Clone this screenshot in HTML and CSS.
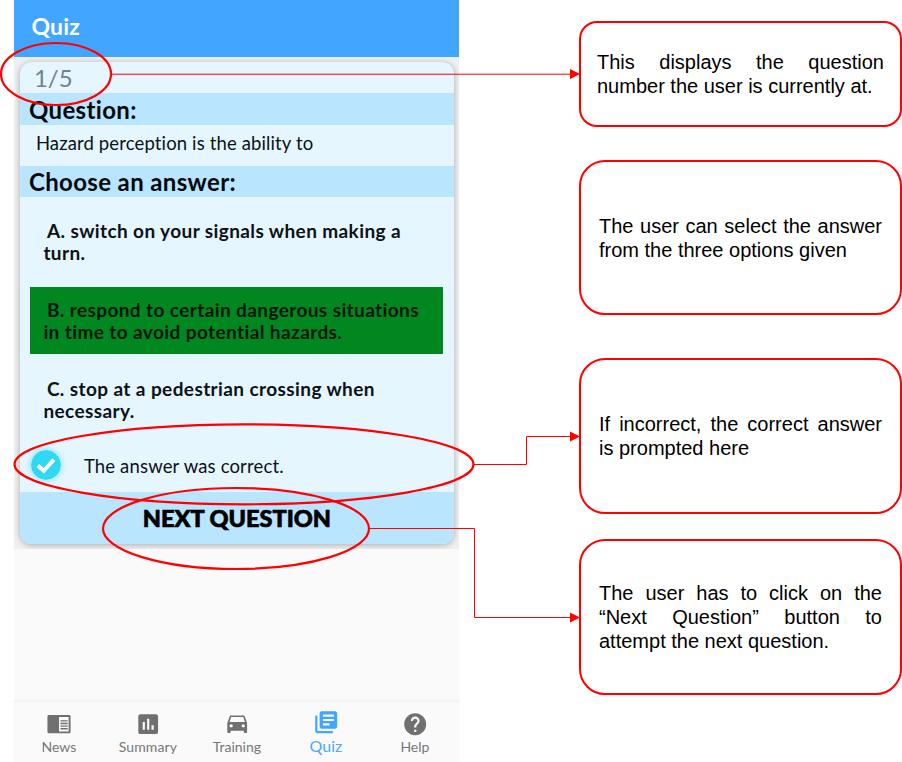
FILE: index.html
```html
<!DOCTYPE html>
<html lang="en">
<head>
<meta charset="utf-8">
<title>Quiz</title>
<link rel="stylesheet" href="styles.css">
</head>
<body>
<div class="board">
  <div class="phone">
    <header class="topbar"><span>Quiz</span></header>
    <main class="screen">
      <section class="card">
        <div class="counter"><span>1/5</span></div>
        <h2 class="band"><span>Question:</span></h2>
        <div class="prompt"><span>Hazard perception is the ability to</span></div>
        <h2 class="band band-choose"><span>Choose an answer:</span></h2>
        <div class="answers">
          <div class="option"><span class="lead">A. switch on your signals when making a</span><br><span>turn.</span></div>
          <div class="option correct"><span class="lead">B. respond to certain dangerous situations</span><br><span>in time to avoid potential hazards.</span></div>
          <div class="option last"><span class="lead">C. stop at a pedestrian crossing when</span><br><span>necessary.</span></div>
          <div class="result">
            <svg class="tick" width="30" height="30" viewBox="0 0 30 30"><circle cx="15" cy="15" r="15" fill="#2fd9f4"/><path d="M6.800 15.600l6 5.200L22.800 9.600" fill="none" stroke="#fff" stroke-width="4"/></svg>
            <span>The answer was correct.</span>
          </div>
        </div>
        <div class="next"><span>NEXT QUESTION</span></div>
      </section>
    </main>
    <nav class="tabs">
      <div class="tab"><svg width="26" height="24" viewBox="0 0 27 24"><path fill="#707070" fill-rule="evenodd" d="M3 2.500h21a1.500 1.500 0 0 1 1.500 1.500v16a1.500 1.500 0 0 1-1.500 1.500H3A1.500 1.500 0 0 1 1.500 20V4A1.500 1.500 0 0 1 3 2.500zM13.500 4.500v15h10v-15z"/><path d="M15 8.500h7.500M15 11.300h7.500M15 14h7.500M15 16.700h7.500" stroke="#707070" stroke-width="1.400"/></svg><span>News</span></div>
      <div class="tab"><svg width="26.400" height="26.400" viewBox="0 0 24 24"><path fill="#707070" d="M19 3H5c-1.100 0-2 .9-2 2v14c0 1.100.9 2 2 2h14c1.100 0 2-.9 2-2V5c0-1.100-.9-2-2-2zM9 17H7v-7h2v7zm4 0h-2V7h2v10zm4 0h-2v-4h2v4z"/></svg><span class="wide">Summary</span></div>
      <div class="tab"><svg width="26.400" height="26.400" viewBox="0 0 24 24"><path fill="#707070" d="M18.920 5.010C18.720 4.420 18.160 4 17.500 4h-11c-.66 0-1.210.42-1.420 1.010L3 11v8c0 .55.45 1 1 1h1c.55 0 1-.45 1-1v-1h12v1c0 .55.45 1 1 1h1c.55 0 1-.45 1-1v-8l-2.080-5.990zM6.500 15c-.83 0-1.500-.67-1.500-1.500S5.670 12 6.500 12s1.500.67 1.500 1.500S7.330 15 6.500 15zm11 0c-.83 0-1.500-.67-1.500-1.500s.67-1.500 1.500-1.500 1.500.67 1.500 1.500-.67 1.500-1.500 1.500zM5 10l1.500-4.500h11L19 10H5z"/></svg><span>Training</span></div>
      <div class="tab active"><svg width="26.400" height="26.400" viewBox="0 0 24 24"><path fill="#42a5ff" d="M4 6H2v14c0 1.100.9 2 2 2h14v-2H4V6zm16-4H8c-1.100 0-2 .9-2 2v12c0 1.100.9 2 2 2h12c1.100 0 2-.9 2-2V4c0-1.100-.9-2-2-2zm-1 9H9V9h10v2zm-4 4H9v-2h6v2zm4-8H9V5h10v2z"/></svg><span>Quiz</span></div>
      <div class="tab"><svg width="26.400" height="26.400" viewBox="0 0 24 24"><path fill="#707070" d="M12 2C6.480 2 2 6.480 2 12s4.480 10 10 10 10-4.480 10-10S17.520 2 12 2zm1 17h-2v-2h2v2zm2.070-7.750l-.9.920C13.450 12.900 13 13.500 13 15h-2v-.5c0-1.100.45-2.100 1.170-2.830l1.240-1.260c.37-.36.59-.86.59-1.410 0-1.100-.9-2-2-2s-2 .9-2 2H8c0-2.210 1.790-4 4-4s4 1.790 4 4c0 .88-.36 1.680-.93 2.250z"/></svg><span>Help</span></div>
    </nav>
  </div>
  <aside class="notes">
    <div class="note first"><p>This displays the question number the user is currently at.</p></div>
    <div class="note second"><p>The user can select the answer from the three options given</p></div>
    <div class="note third"><p>If incorrect, the correct answer is prompted here</p></div>
    <div class="note fourth"><p>The user has to click on the “Next Question” button to attempt the next question.</p></div>
  </aside>
  <svg class="marks" width="902" height="762" viewBox="0 0 902 762" fill="none" stroke="#f00">
    <g stroke-width="2.200">
      <ellipse cx="56" cy="74" rx="55" ry="31"/>
      <ellipse cx="244" cy="464.300" rx="229.500" ry="40"/>
      <ellipse cx="236" cy="528.500" rx="133" ry="40.500"/>
    </g>
    <g stroke-width="1">
      <path d="M111 74.200H571"/>
      <path d="M474 464.500H526.500V436.500H571"/>
      <path d="M369 528.500H474.500V617.500H571"/>
    </g>
    <path d="M570 69l10 5-10 5zM570 431.500l10 5-10 5zM570 612.500l10 5-10 5z" fill="#f00" stroke="none"/>
  </svg>
</div>
</body>
</html>
```

FILE: styles.css
```css
* { box-sizing: border-box; }
body { margin: 0; background: #fff; font-family: Lato, "Liberation Sans", sans-serif; font-variant-ligatures: none; color: #0c1216; }
h2, p { margin: 0; }
.board { position: relative; display: flex; width: 902px; height: 762px; overflow: hidden; }
.phone { display: flex; flex-direction: column; width: 445px; margin-left: 14.400px; background: #fafafa; }
.phone span { white-space: nowrap; }
.topbar { flex: none; display: flex; align-items: center; height: 57px; padding: 0 0 5px 17px; background: #42a5ff; color: #fff; font-size: 23px; font-weight: 700; letter-spacing: .2px; }
.screen { height: 492px; flex: none; overflow: hidden; background: #eeeff0; padding: 5px 5.500px; }
.card { height: 482px; border-radius: 12px; background: #e5f6ff; overflow: hidden; box-shadow: 0 1px 5px 1px rgba(0,0,0,.22); display: flex; flex-direction: column; }
.card > * { flex: none; }
.counter { height: 31px; padding-left: 14px; line-height: 32px; font-size: 24px; font-weight: 400; color: #74818a; }
.band { height: 32px; background: #b9e5ff; padding-left: 9px; font-size: 24px; line-height: 33px; font-weight: 700; letter-spacing: .36px; color: #05090c; }
.band-choose { height: 31px; line-height: 32px; }
.prompt { height: 41px; padding-left: 16px; line-height: 37px; font-size: 18.500px; letter-spacing: .13px; }
.answers { height: 295px; padding: 11px 11px 0 10px; }
.option { height: 67px; margin-bottom: 12px; padding: 12px 0 0 13.500px; font-size: 19px; line-height: 22px; font-weight: 700; letter-spacing: .4px; }
.correct { background: #00871f; color: #03160a; }
.last { margin-bottom: 0; }
.lead { margin-left: 3.500px; }
.result { display: flex; align-items: center; height: 34px; padding-left: 1.500px; margin-top: 15px; gap: 22.500px; font-size: 18.500px; letter-spacing: .16px; }
.result span { padding-top: 1px; }
.tick { border-radius: 50%; box-shadow: 0 0 4px 2px #a6ecfa; }
.next { height: 52px; background: #b9e5ff; display: flex; justify-content: center; line-height: 53px; font-size: 23.500px; font-weight: 900; -webkit-text-stroke: .7px #000; color: #000; }
.tabs { display: flex; height: 61px; margin-top: auto; border-top: 1px solid #f2f2f2; background: #fafafa; box-shadow: 0 -1px 2px #f5f5f5; }
.tab { width: 89px; display: flex; flex-direction: column; align-items: center; padding-top: 9px; color: #777; font-size: 14px; line-height: 20px; }
.tab svg { height: 26.400px; flex: none; }
.wide { letter-spacing: .1px; }
.active { color: #4da9f5; padding-top: 7px; font-size: 16px; line-height: 22px; }
.notes { display: flex; flex-direction: column; width: 323px; margin-left: 119.600px; padding-top: 21px; font: 20px/24px "Liberation Sans", Arial, sans-serif; color: #000; }
.note { flex: none; height: 156px; display: flex; align-items: center; padding: 0 18px; border: 2px solid #f00; border-radius: 26px; text-align: justify; }
.first { height: 106px; border-radius: 18px; padding: 0 16px; margin-bottom: 33px; }
.second { height: 155px; margin-bottom: 43px; }
.third { margin-bottom: 25px; }
.marks { position: absolute; left: 0; top: 0; }
```
